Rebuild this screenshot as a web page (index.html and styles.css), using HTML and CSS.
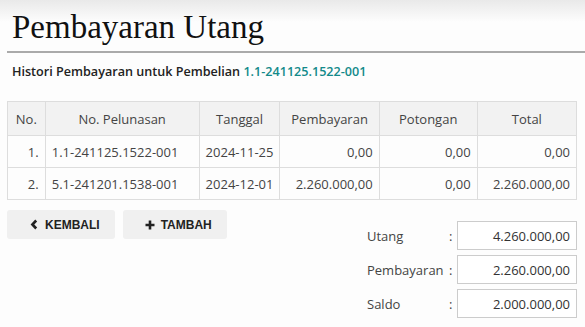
FILE: index.html
```html
<!DOCTYPE html>
<html lang="en">
<head>
    <meta charset="UTF-8">
    <meta name="viewport" content="width=device-width, initial-scale=1.0">
    <title>Pembayaran Utang</title>
    <link rel="stylesheet" href="styles.css">
</head>
<body>

<div class="page">
    <h1 class="title">Pembayaran Utang</h1>
    <p class="subtitle">Histori Pembayaran untuk Pembelian <a href="#">1.1-241125.1522-001</a></p>

    <table class="history">
        <thead>
            <tr>
                <th class="col-no">No.</th>
                <th class="col-ref">No. Pelunasan</th>
                <th class="col-date">Tanggal</th>
                <th class="col-num">Pembayaran</th>
                <th class="col-num">Potongan</th>
                <th class="col-num">Total</th>
            </tr>
        </thead>
        <tbody>
            <tr>
                <td class="right">1.</td>
                <td>1.1-241125.1522-001</td>
                <td>2024-11-25</td>
                <td class="right">0,00</td>
                <td class="right">0,00</td>
                <td class="right">0,00</td>
            </tr>
            <tr>
                <td class="right">2.</td>
                <td>5.1-241201.1538-001</td>
                <td>2024-12-01</td>
                <td class="right">2.260.000,00</td>
                <td class="right">0,00</td>
                <td class="right">2.260.000,00</td>
            </tr>
        </tbody>
    </table>

    <div class="bottom">
        <div class="actions">
            <button class="btn" type="button">
                <svg width="10" height="11" viewBox="0 0 10 11"><path d="M7.2 1.5 3.4 5.5 7.2 9.5" fill="none" stroke="#222" stroke-width="2.6"/></svg>
                KEMBALI
            </button>
            <button class="btn" type="button">
                <svg width="10" height="10" viewBox="0 0 10 10"><path d="M5 0.5v9M0.5 5h9" fill="none" stroke="#222" stroke-width="2.6"/></svg>
                TAMBAH
            </button>
        </div>

        <div class="summary">
            <label class="sum-row"><span class="sum-label">Utang</span><span class="colon">:</span><input type="text" value="4.260.000,00" readonly></label>
            <label class="sum-row"><span class="sum-label">Pembayaran</span><span class="colon">:</span><input type="text" value="2.260.000,00" readonly></label>
            <label class="sum-row"><span class="sum-label">Saldo</span><span class="colon">:</span><input type="text" value="2.000.000,00" readonly></label>
        </div>
    </div>
</div>

</body>
</html>
```

FILE: styles.css
```css
body {
    margin: 0;
    font-family: "Open Sans", sans-serif;
    font-size: 13px;
    color: #333;
    background: linear-gradient(#e9e9e9, #fdfdfd 22px, #fdfdfd);
    min-height: 327px;
}
.page {
    padding: 0 8px 0 7px;
}
.title {
    margin: 0 -8px 0 0;
    padding: 9px 0 6px 5px;
    font-family: "Liberation Serif", serif;
    font-weight: normal;
    font-size: 33px;
    line-height: 36px;
    color: #111;
    border-bottom: 2px solid #aaa;
}
.subtitle {
    margin: 0;
    padding: 10px 0 0 5px;
    font-weight: 600;
    font-size: 12.6px;
    line-height: 18px;
    color: #222;
}
.subtitle a {
    color: #138a8a;
    text-decoration: none;
}
.history {
    width: 100%;
    margin-top: 20px;
    border-collapse: collapse;
    color: #444;
}
.history th,
.history td {
    border: 1px solid #ddd;
    padding: 0 6px;
    height: 31px;
    white-space: nowrap;
}
.history th {
    background: #f2f2f2;
    font-weight: normal;
    height: 33px;
}
.history td.right {
    text-align: right;
}
.col-no { width: 25px; }
.col-ref { width: 142px; }
.col-date { width: 64px; }
.col-num { width: 87px; }
.bottom {
    display: flex;
    justify-content: space-between;
    margin-top: 10px;
}
.actions {
    display: flex;
    gap: 8px;
    align-items: flex-start;
}
.btn {
    display: flex;
    align-items: center;
    gap: 6px;
    height: 29px;
    padding: 0 15px 0 22px;
    border: none;
    border-radius: 3px;
    background: #f0f0f0;
    font-family: "Liberation Sans", Arial, sans-serif;
    font-weight: bold;
    font-size: 12px;
    color: #222;
}
.summary {
    display: flex;
    flex-direction: column;
    gap: 5px;
    padding-top: 11px;
}
.sum-row {
    display: flex;
    align-items: center;
    color: #444;
}
.sum-label {
    width: 82px;
    padding-left: 1px;
}
.colon {
    width: 8px;
}
.sum-row input {
    width: 120px;
    height: 29px;
    box-sizing: border-box;
    border: 1px solid #ccc;
    padding: 0 6px;
    text-align: right;
    font-family: "Open Sans", sans-serif;
    font-size: 13px;
    color: #333;
    background: #fff;
}
```
